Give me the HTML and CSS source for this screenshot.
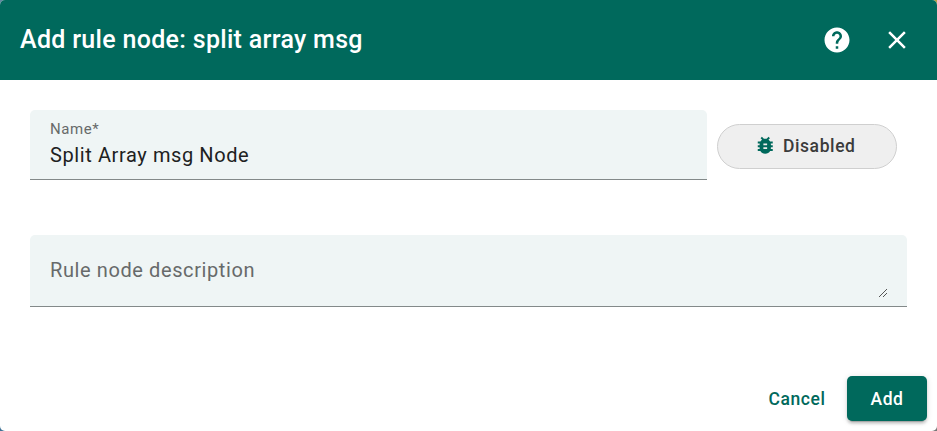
FILE: index.html
```html
<!DOCTYPE html>
<html lang="en">
<head>
<meta charset="utf-8">
<title>Add rule node</title>
<link rel="stylesheet" href="styles.css">
</head>
<body>
<form class="dialog">
  <header class="toolbar">
    <h2 class="title">Add rule node: split array msg</h2>
    <button class="icon-button" type="button" aria-label="Help">
      <svg viewBox="0 0 24 24"><path d="M12 2C6.480 2 2 6.480 2 12s4.480 10 10 10 10-4.480 10-10S17.520 2 12 2zm1 17h-2v-2h2v2zm2.070-7.750l-.9.920C13.450 12.900 13 13.500 13 15h-2v-.5c0-1.100.450-2.100 1.170-2.830l1.240-1.260c.370-.360.590-.860.590-1.410 0-1.100-.9-2-2-2s-2 .9-2 2H8c0-2.210 1.790-4 4-4s4 1.790 4 4c0 .880-.360 1.680-.930 2.250z"/></svg>
    </button>
    <button class="icon-button" type="button" aria-label="Close">
      <svg viewBox="0 0 24 24"><path d="M19 6.410L17.590 5 12 10.590 6.410 5 5 6.410 10.590 12 5 17.590 6.410 19 12 13.410 17.590 19 19 17.590 13.410 12z"/></svg>
    </button>
  </header>
  <main class="content">
    <div class="name-row">
      <label class="field name-field">
        <span class="field-label">Name*</span>
        <span class="field-value">Split Array msg Node</span>
      </label>
      <button class="debug-button" type="button">
        <svg class="bug" viewBox="0 0 24 24"><path d="M20 8h-2.810c-.450-.780-1.070-1.450-1.820-1.960L17 4.410 15.590 3l-2.170 2.170C12.960 5.060 12.490 5 12 5s-.960.060-1.410.170L8.410 3 7 4.410l1.620 1.630C7.880 6.550 7.260 7.220 6.810 8H4v2h2.090C6.040 10.330 6 10.660 6 11v1H4v2h2v1c0 .340.040.670.090 1H4v2h2.810c1.040 1.790 2.970 3 5.190 3s4.150-1.210 5.190-3H20v-2h-2.090c.050-.330.090-.660.090-1v-1h2v-2h-2v-1c0-.340-.040-.670-.090-1H20V8zm-6 8h-4v-2h4v2zm0-4h-4v-2h4v2z"/></svg>
        <span>Disabled</span>
      </button>
    </div>
    <label class="field description-field">
      <span class="placeholder">Rule node description</span>
      <svg class="grip" viewBox="0 0 8 8" shape-rendering="crispEdges"><path d="M0 7h1v-1h1v-1h1v-1h1v-1h1v-1h1v-1h1v-1h1v1h-1v1h-1v1h-1v1h-1v1h-1v1h-1v1h-1v1h-1zM4 7h1v-1h1v-1h1v-1h1v1h-1v1h-1v1h-1v1h-1z"/></svg>
    </label>
  </main>
  <footer class="actions">
    <button class="cancel" type="button">Cancel</button>
    <button class="add" type="button">Add</button>
  </footer>
</form>
</body>
</html>
```
FILE: styles.css
```css
* { box-sizing: border-box; }
body {
  margin: 0;
  font-family: Roboto, sans-serif;
  background: linear-gradient(90deg, #6288a0 50%, #b5a044 50%) top / 100% 10px no-repeat,
    linear-gradient(90deg, #3f7295 50%, #777 50%);
}
button { font: inherit; margin: 0; padding: 0; border: 0; background: none; }
svg { display: block; fill: currentColor; }
.dialog {
  display: flex;
  flex-direction: column;
  width: 937px;
  height: 431px;
  background: #fff;
  border-radius: 5px;
  overflow: hidden;
}
.toolbar {
  display: flex;
  align-items: center;
  height: 80px;
  padding: 0 10px 0 20px;
  background: #00695c;
  color: #fff;
}
.title {
  flex: 1;
  margin: 0;
  font-size: 25px;
  line-height: 40px;
  font-weight: 500;
  letter-spacing: .31px;
}
.icon-button {
  display: grid;
  place-items: center;
  width: 60px;
  height: 60px;
  color: inherit;
}
.icon-button svg { width: 30px; height: 30px; }
.content { flex: 1; padding: 30px; }
.name-row { display: flex; gap: 10px; padding-right: 10px; margin-bottom: 55px; }
.field {
  display: flex;
  border-bottom: 1px solid #838989;
  border-radius: 5px 5px 0 0;
  background: #eff5f5;
}
.name-field {
  flex: 1;
  flex-direction: column;
  height: 70px;
  padding: 9px 20px 0;
}
.field-label {
  margin-bottom: 1px;
  font-size: 15px;
  line-height: 20px;
  letter-spacing: .6px;
  color: #676a6a;
}
.field-value {
  font-size: 20px;
  line-height: 30px;
  letter-spacing: .6px;
  color: #202121;
}
.debug-button {
  display: flex;
  align-items: center;
  justify-content: center;
  gap: 6px;
  width: 180px;
  height: 45px;
  margin-top: 14px;
  padding: 0 4px 2px 0;
  border: 1px solid #cfcfcf;
  border-radius: 23px;
  background: #efefef;
  color: #3b3b3b;
  font-size: 17.5px;
  font-weight: 500;
  letter-spacing: .6px;
}
.bug { width: 22.5px; height: 22.5px; color: #00695c; }
.description-field {
  justify-content: space-between;
  height: 72px;
  padding: 20px 20px 0;
}
.placeholder {
  font-size: 20px;
  line-height: 30px;
  letter-spacing: .6px;
  color: #676a6a;
}
.grip { width: 8px; height: 8px; margin-top: 34px; color: #555; }
.actions {
  display: flex;
  justify-content: flex-end;
  align-items: center;
  padding: 0 10px 10px;
  font-size: 17.5px;
  font-weight: 500;
}
.actions button { height: 45px; letter-spacing: .6px; }
.cancel { width: 100px; color: #00695c; }
.add {
  width: 80px;
  border-radius: 5px;
  background: #00695c;
  color: #fff;
  box-shadow: 0 4px 1px -3px rgba(0,0,0,.2), 0 2.5px 2.5px rgba(0,0,0,.14), 0 1px 6px rgba(0,0,0,.12);
}
```
